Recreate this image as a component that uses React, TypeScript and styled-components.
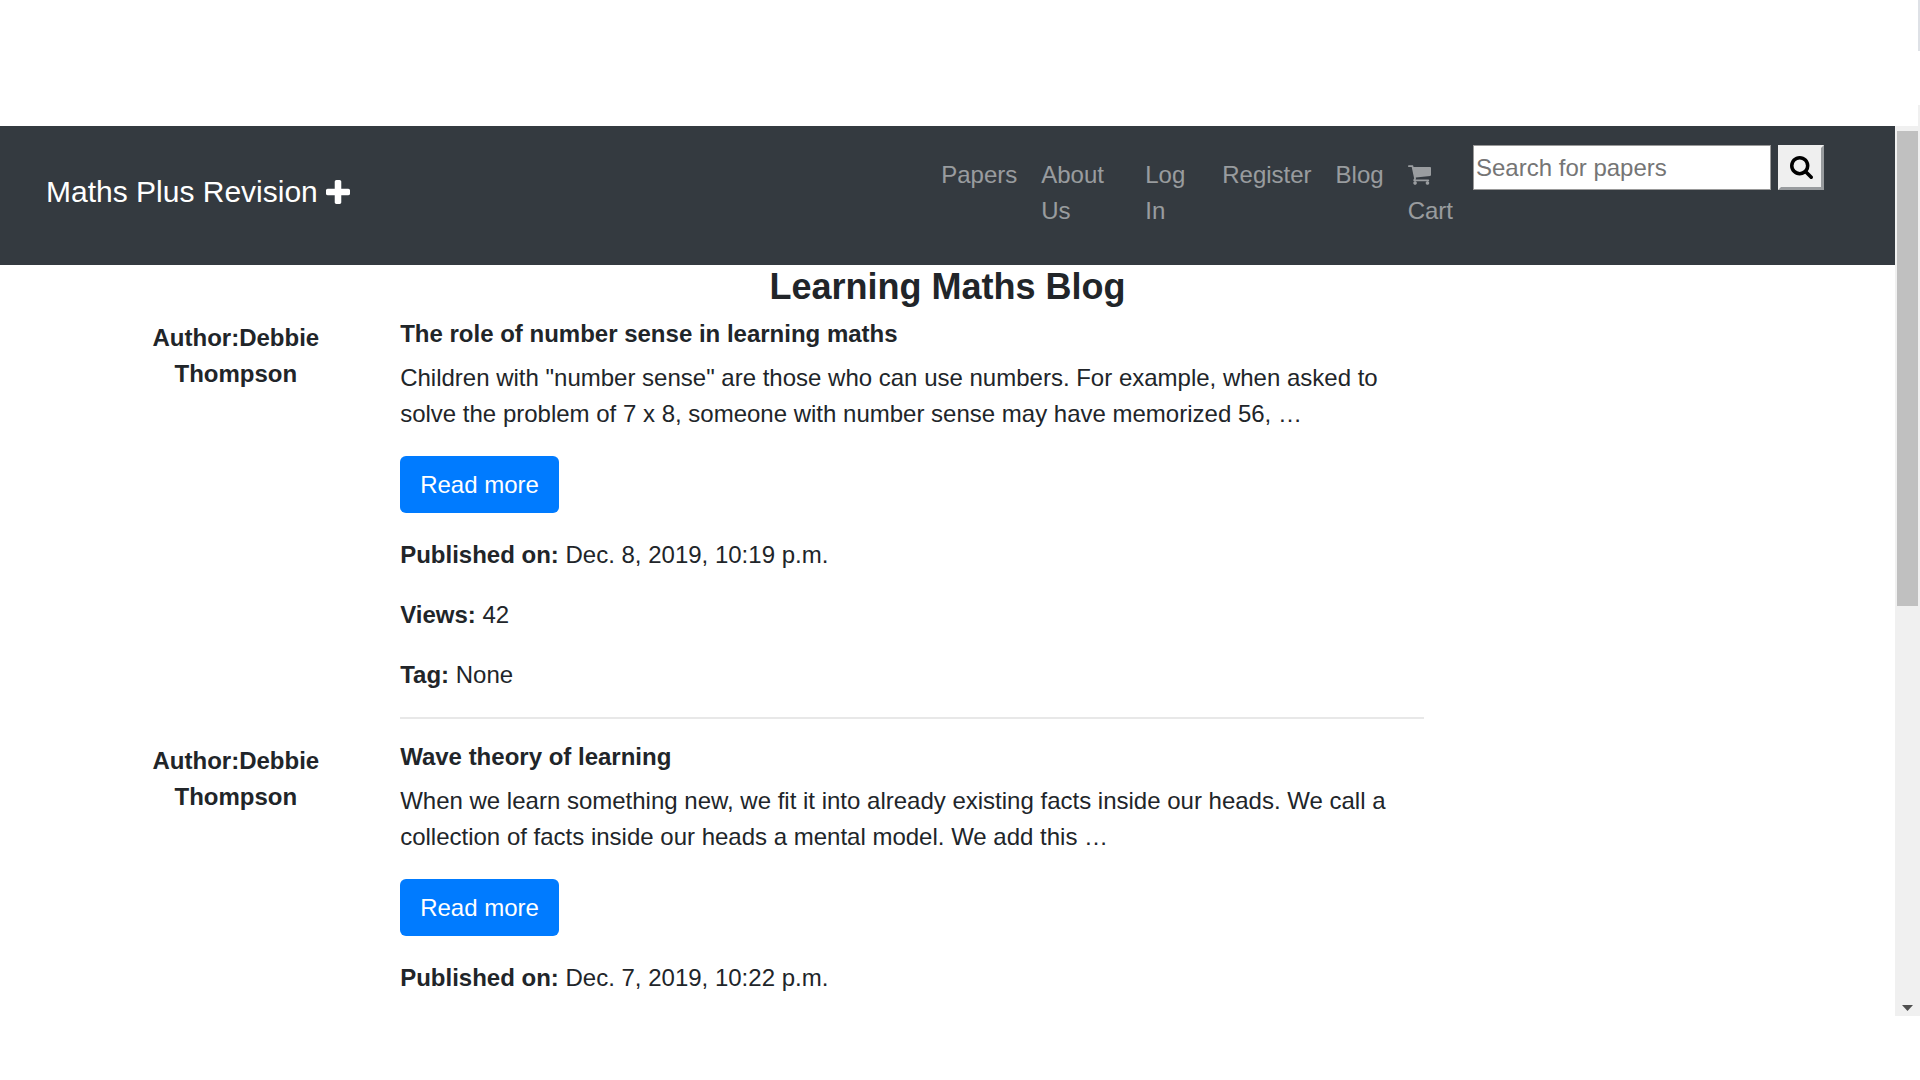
import React from "react";
import styled, { createGlobalStyle } from "styled-components";

const GlobalStyle = createGlobalStyle`
  *, *::before, *::after { box-sizing: border-box; }
  body {
    margin: 0;
    background: #fff;
    color: #212529;
    font: 24px/36px "Liberation Sans", Arial, sans-serif;
  }
`;

const Frame = styled.div`
  display: grid;
  grid-template-rows: 126px minmax(0, 1fr) 64px;
  height: 100vh;
`;

const TopEdge = styled.div`
  display: grid;
  grid-template-rows: 51px 1fr 21px;
  justify-self: end;
  width: 2px;
`;

const Edge = styled.div<{ $color: string }>`
  background: ${(p) => p.$color};
`;

const Viewport = styled.div`
  display: grid;
  grid-template-columns: minmax(0, 1fr) 25px;
  min-height: 0;
`;

const Content = styled.div`
  overflow: hidden;
`;

const Navbar = styled.nav`
  display: flex;
  align-items: center;
  justify-content: space-between;
  padding: 19px 71px 24px 46px;
  background: #343a40;
`;

const Brand = styled.a`
  display: flex;
  align-items: center;
  gap: 8px;
  padding-bottom: 3px;
  color: #fff;
  font-size: 30px;
  line-height: 45px;
  text-decoration: none;
`;

const Menu = styled.div`
  display: flex;
  align-items: flex-start;
`;

const Links = styled.ul`
  display: flex;
  margin: 0;
  padding: 0;
  list-style: none;
`;

const Item = styled.li<{ $width?: number }>`
  width: ${(p) => (p.$width ? `${p.$width}px` : "auto")};
`;

const NavLink = styled.a`
  display: block;
  padding: 12px;
  color: rgba(255, 255, 255, 0.5);
  text-decoration: none;
`;

const CartIcon = styled.svg`
  display: block;
  width: 23px;
  height: 36px;
`;

const Search = styled.form`
  display: flex;
  gap: 7px;
  margin-left: 8px;
`;

const SearchInput = styled.input`
  width: 298px;
  height: 45px;
  padding: 2px;
  border: 1px solid #999;
  border-radius: 0;
  background: #fff;
  font: inherit;
  &::placeholder { color: #757575; }
`;

const SearchButton = styled.button`
  display: grid;
  place-items: center;
  width: 46px;
  height: 45px;
  padding: 0;
  border: 3px solid;
  border-color: #efefef #989b9e #989b9e #efefef;
  background: #efefef;
  color: #000;
`;

const Title = styled.h1`
  margin: 0 0 12px;
  font-size: 36px;
  line-height: 43px;
  text-align: center;
`;

const Posts = styled.main`
  max-width: 1708px;
  margin: 0 auto;
`;

const Post = styled.article`
  display: grid;
  grid-template-columns: 2fr 7.5fr 2.5fr;
`;

const Author = styled.strong`
  padding: 0 22px;
  text-align: center;
`;

const Body = styled.div`
  padding: 0 22px;
`;

const Heading = styled.h2`
  margin: 0 0 12px;
  font-size: 24px;
  line-height: 28px;
`;

const Text = styled.p`
  margin: 0 0 24px;
`;

const ReadMore = styled.button`
  display: block;
  height: 57px;
  margin: 0 0 24px;
  padding: 0 20px;
  border: 0;
  border-radius: 6px;
  background: #007bff;
  color: #fff;
  font: inherit;
`;

const Rule = styled.hr`
  height: 2px;
  margin: 0 0 24px;
  border: 0;
  background: #e8e8e8;
`;

const Track = styled.div`
  display: flex;
  flex-direction: column;
  justify-content: space-between;
  align-items: center;
  padding: 5px 2px;
  background: #f0f0f0;
`;

const Thumb = styled.div`
  width: 21px;
  height: 54%;
  background: #c0c0c0;
`;

const posts = [
  {
    title: "The role of number sense in learning maths",
    text: 'Children with "number sense" are those who can use numbers. For example, when asked to solve the problem of 7 x 8, someone with number sense may have memorized 56, …',
    date: "Dec. 8, 2019, 10:19 p.m.",
    views: "42",
  },
  {
    title: "Wave theory of learning",
    text: "When we learn something new, we fit it into already existing facts inside our heads. We call a collection of facts inside our heads a mental model. We add this …",
    date: "Dec. 7, 2019, 10:22 p.m.",
  },
];

export default function App() {
  return (
    <Frame>
      <GlobalStyle />
      <TopEdge>
        <Edge $color="#dee1e6" />
        <Edge $color="#fff" />
        <Edge $color="#f0f0f0" />
      </TopEdge>
      <Viewport>
        <Content>
          <Navbar>
            <Brand href="#">
              Maths Plus Revision
              <svg width="24" height="24" viewBox="192 128 1408 1408" fill="currentColor" aria-hidden>
                <path d="M1600 736v192q0 40-28 68t-68 28h-416v416q0 40-28 68t-68 28h-192q-40 0-68-28t-28-68v-416h-416q-40 0-68-28t-28-68v-192q0-40 28-68t68-28h416v-416q0-40 28-68t68-28h192q40 0 68 28t28 68v416h416q40 0 68 28t28 68z" />
              </svg>
            </Brand>
            <Menu>
              <Links>
                <Item><NavLink href="#">Papers</NavLink></Item>
                <Item $width={104}><NavLink href="#">About Us</NavLink></Item>
                <Item $width={77}><NavLink href="#">Log In</NavLink></Item>
                <Item><NavLink href="#">Register</NavLink></Item>
                <Item><NavLink href="#">Blog</NavLink></Item>
                <Item>
                  <NavLink href="#">
                    <CartIcon viewBox="64 256 1664 1408" fill="currentColor" aria-hidden>
                      <path d="M704 1536q0 52-38 90t-90 38-90-38-38-90 38-90 90-38 90 38 38 90zm896 0q0 52-38 90t-90 38-90-38-38-90 38-90 90-38 90 38 38 90zm128-1088v512q0 24-16.500 42.500t-40.500 21.500l-1044 122q13 60 13 70 0 16-24 64h920q26 0 45 19t19 45-19 45-45 19h-1024q-26 0-45-19t-19-45q0-11 8-31.500t16-36 21.500-40 15.500-29.500l-177-823h-204q-26 0-45-19t-19-45 19-45 45-19h256q16 0 28.500 6.500t19.500 15.500 13 24.500 8 26 5.500 29.500 4.500 26h1201q26 0 45 19t19 45z" />
                    </CartIcon>
                    Cart
                  </NavLink>
                </Item>
              </Links>
              <Search>
                <SearchInput type="text" placeholder="Search for papers" aria-label="Search for papers" />
                <SearchButton type="button" aria-label="Search">
                  <svg width="23" height="23" viewBox="64 128 1664 1664" fill="currentColor" aria-hidden>
                    <path d="M1216 832q0-185-131.500-316.500t-316.500-131.500-316.500 131.500-131.500 316.500 131.500 316.500 316.500 131.500 316.500-131.500 131.500-316.500zm512 832q0 52-38 90t-90 38q-54 0-90-38l-343-342q-179 124-399 124-143 0-273.500-55.500t-225-150-150-225-55.500-273.500 55.500-273.500 150-225 225-150 273.500-55.500 273.500 55.500 225 150 150 225 55.500 273.500q0 220-124 399l343 343q37 37 37 90z" />
                  </svg>
                </SearchButton>
              </Search>
            </Menu>
          </Navbar>
          <Title>Learning Maths Blog</Title>
          <Posts>
            {posts.map((post) => (
              <Post key={post.title}>
                <Author>Author:Debbie Thompson</Author>
                <Body>
                  <Heading>{post.title}</Heading>
                  <Text>{post.text}</Text>
                  <ReadMore type="button">Read more</ReadMore>
                  <Text><b>Published on:</b> {post.date}</Text>
                  {post.views && (
                    <>
                      <Text><b>Views:</b> {post.views}</Text>
                      <Text><b>Tag:</b> None</Text>
                      <Rule />
                    </>
                  )}
                </Body>
              </Post>
            ))}
          </Posts>
        </Content>
        <Track>
          <Thumb />
          <svg width="11" height="6" viewBox="0 0 11 6" aria-hidden>
            <path d="M0 0h11L5.500 6z" fill="#505050" />
          </svg>
        </Track>
      </Viewport>
    </Frame>
  );
}
